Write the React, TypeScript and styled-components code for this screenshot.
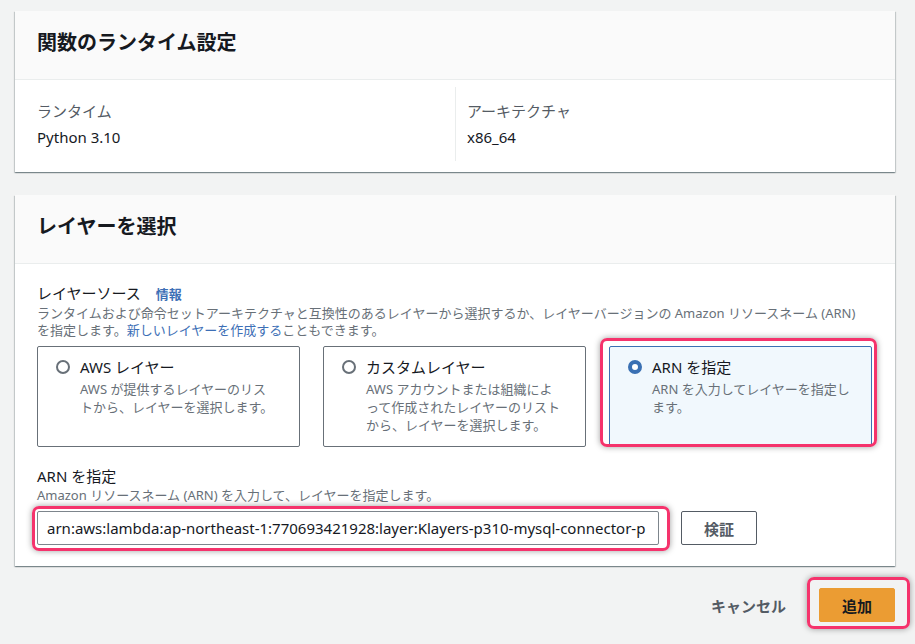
import styled, { createGlobalStyle } from 'styled-components';

const GlobalStyle = createGlobalStyle`
    body {
        margin: 0;
        background: #f2f3f3;
        font-family: "Noto Sans", "Noto Sans CJK JP", sans-serif;
        color: #16191f;
    }
`;

const Page = styled.div`
    padding: 11px 20px 14px 15px;
    display: flex;
    flex-direction: column;
    gap: 23px;
`;

const Card = styled.section`
    background: #fff;
    box-shadow: 0 1px 1px 0 rgba(0, 28, 36, 0.3), 1px 1px 1px 0 rgba(0, 28, 36, 0.15), -1px 1px 1px 0 rgba(0, 28, 36, 0.15);
`;

const CardHeader = styled.header`
    background: #fafafa;
    border-bottom: 1px solid #eaeded;
    padding: 19px 22px 23px;
`;

const Title = styled.h2`
    margin: 0;
    font-size: 20px;
    line-height: 26px;
    font-weight: 700;
`;

const Columns = styled.div`
    display: grid;
    grid-template-columns: 1fr 1fr;
    padding: 7px 22px 11px;
`;

const Column = styled.div<{ $divider?: boolean }>`
    display: flex;
    flex-direction: column;
    gap: 4px;
    padding: 13px 0 13px ${p => (p.$divider ? '11px' : '0')};
    border-left: ${p => (p.$divider ? '1px solid #eaeded' : 'none')};
`;

const KeyLabel = styled.div`
    font-size: 15px;
    line-height: 22px;
    color: #545b64;
`;

const Value = styled.div`
    font-size: 15px;
    line-height: 22px;
`;

const CardBody = styled.div`
    padding: 18px 22px 21px;
`;

const FieldLabel = styled.div`
    font-size: 15px;
    line-height: 22px;
    display: flex;
    align-items: baseline;
`;

const InfoLink = styled.a`
    margin-left: 15px;
    font-size: 13px;
    font-weight: 700;
    color: #3d6fb6;
    text-decoration: none;
`;

const Hint = styled.div`
    font-size: 13px;
    line-height: 17px;
    color: #687078;
`;

const HintLink = styled.a`
    color: #3d6fb6;
    text-decoration: none;
`;

const Tiles = styled.div`
    display: grid;
    grid-template-columns: repeat(3, 1fr);
    gap: 23px;
    margin: 7px 1px 18px 0;
`;

const TileWrap = styled.div`
    position: relative;
    display: flex;
`;

const Tile = styled.label<{ $selected?: boolean }>`
    flex: 1;
    display: flex;
    align-items: flex-start;
    gap: 10px;
    height: 101px;
    box-sizing: border-box;
    padding: 9px 12px 0 18px;
    border: 1px solid ${p => (p.$selected ? '#3a70b3' : '#687078')};
    border-radius: 2px;
    background: ${p => (p.$selected ? '#f1f8fd' : '#fff')};
`;

const Radio = styled.span<{ $checked?: boolean }>`
    flex: none;
    width: 14px;
    height: 14px;
    margin-top: 4px;
    box-sizing: border-box;
    border-radius: 50%;
    border: ${p => (p.$checked ? '4px solid #3a70b3' : '2px solid #687078')};
    background: #fff;
`;

const TileText = styled.div`
    display: flex;
    flex-direction: column;
    gap: 2px;
`;

const TileTitle = styled.div`
    font-size: 15px;
    line-height: 22px;
`;

const TileDesc = styled.div`
    font-size: 13px;
    line-height: 18px;
    color: #687078;
`;

const Highlight = styled.div<{ $inset: string }>`
    position: absolute;
    inset: ${p => p.$inset};
    border: 3px solid #f5336c;
    border-radius: 7px;
    box-shadow: 0 0 6px rgba(0, 0, 0, 0.38);
    pointer-events: none;
`;

const InputRow = styled.div`
    display: flex;
    gap: 22px;
    margin-top: 7px;
`;

const InputWrap = styled.div`
    position: relative;
    width: 622px;
`;

const TextBox = styled.div`
    height: 34px;
    box-sizing: border-box;
    border: 1px solid #7d858c;
    border-radius: 2px;
    padding: 0 9px;
    font-size: 15px;
    line-height: 32px;
    white-space: nowrap;
    overflow: hidden;
`;

const Button = styled.button<{ $variant?: 'primary' | 'normal' | 'link' }>`
    height: 34px;
    box-sizing: border-box;
    padding: 0 22px;
    font-family: inherit;
    font-size: 15px;
    font-weight: 700;
    border-radius: 2px;
    cursor: pointer;
    color: ${p => (p.$variant === 'primary' ? '#16191f' : '#545b64')};
    background: ${p => (p.$variant === 'primary' ? '#eb9c33' : p.$variant === 'link' ? 'transparent' : '#fff')};
    border: 1px solid ${p => (p.$variant === 'primary' ? '#eb9c33' : p.$variant === 'link' ? 'transparent' : '#545b64')};
`;

const Footer = styled.div`
    display: flex;
    justify-content: flex-end;
    align-items: center;
    gap: 10px;
    margin-top: -1px;
`;

const ButtonWrap = styled.div`
    position: relative;
    display: flex;
`;

const tiles = [
    { title: 'AWS レイヤー', desc: ['AWS が提供するレイヤーのリス', 'トから、レイヤーを選択します。'] },
    { title: 'カスタムレイヤー', desc: ['AWS アカウントまたは組織によ', 'って作成されたレイヤーのリスト', 'から、レイヤーを選択します。'] },
    { title: 'ARN を指定', desc: ['ARN を入力してレイヤーを指定し', 'ます。'], selected: true },
];

export default function App() {
    return (<>
        <GlobalStyle />
        <Page>
            <Card>
                <CardHeader><Title>関数のランタイム設定</Title></CardHeader>
                <Columns>
                    <Column>
                        <KeyLabel>ランタイム</KeyLabel>
                        <Value>Python 3.10</Value>
                    </Column>
                    <Column $divider>
                        <KeyLabel>アーキテクチャ</KeyLabel>
                        <Value>x86_64</Value>
                    </Column>
                </Columns>
            </Card>

            <Card>
                <CardHeader><Title>レイヤーを選択</Title></CardHeader>
                <CardBody>
                    <FieldLabel>レイヤーソース<InfoLink>情報</InfoLink></FieldLabel>
                    <Hint>
                        ランタイムおよび命令セットアーキテクチャと互換性のあるレイヤーから選択するか、レイヤーバージョンの Amazon リソースネーム (ARN)<br />
                        を指定します。<HintLink>新しいレイヤーを作成する</HintLink>こともできます。
                    </Hint>
                    <Tiles>
                        {tiles.map(it => (
                            <TileWrap key={it.title}>
                                <Tile $selected={it.selected}>
                                    <Radio $checked={it.selected} />
                                    <TileText>
                                        <TileTitle>{it.title}</TileTitle>
                                        <TileDesc>
                                            {it.desc.map((line, i) => <div key={i}>{line}</div>)}
                                        </TileDesc>
                                    </TileText>
                                </Tile>
                                {it.selected && <Highlight $inset="-8px -5px 0 -9px" />}
                            </TileWrap>
                        ))}
                    </Tiles>
                    <FieldLabel>ARN を指定</FieldLabel>
                    <Hint>Amazon リソースネーム (ARN) を入力して、レイヤーを指定します。</Hint>
                    <InputRow>
                        <InputWrap>
                            <TextBox>arn:aws:lambda:ap-northeast-1:770693421928:layer:Klayers-p310-mysql-connector-p</TextBox>
                            <Highlight $inset="-5px -11px -6px -5px" />
                        </InputWrap>
                        <Button $variant="normal">検証</Button>
                    </InputRow>
                </CardBody>
            </Card>

            <Footer>
                <Button $variant="link">キャンセル</Button>
                <ButtonWrap>
                    <Button $variant="primary">追加</Button>
                    <Highlight $inset="-11px -15px -7px -12px" />
                </ButtonWrap>
            </Footer>
        </Page>
    </>);
}
